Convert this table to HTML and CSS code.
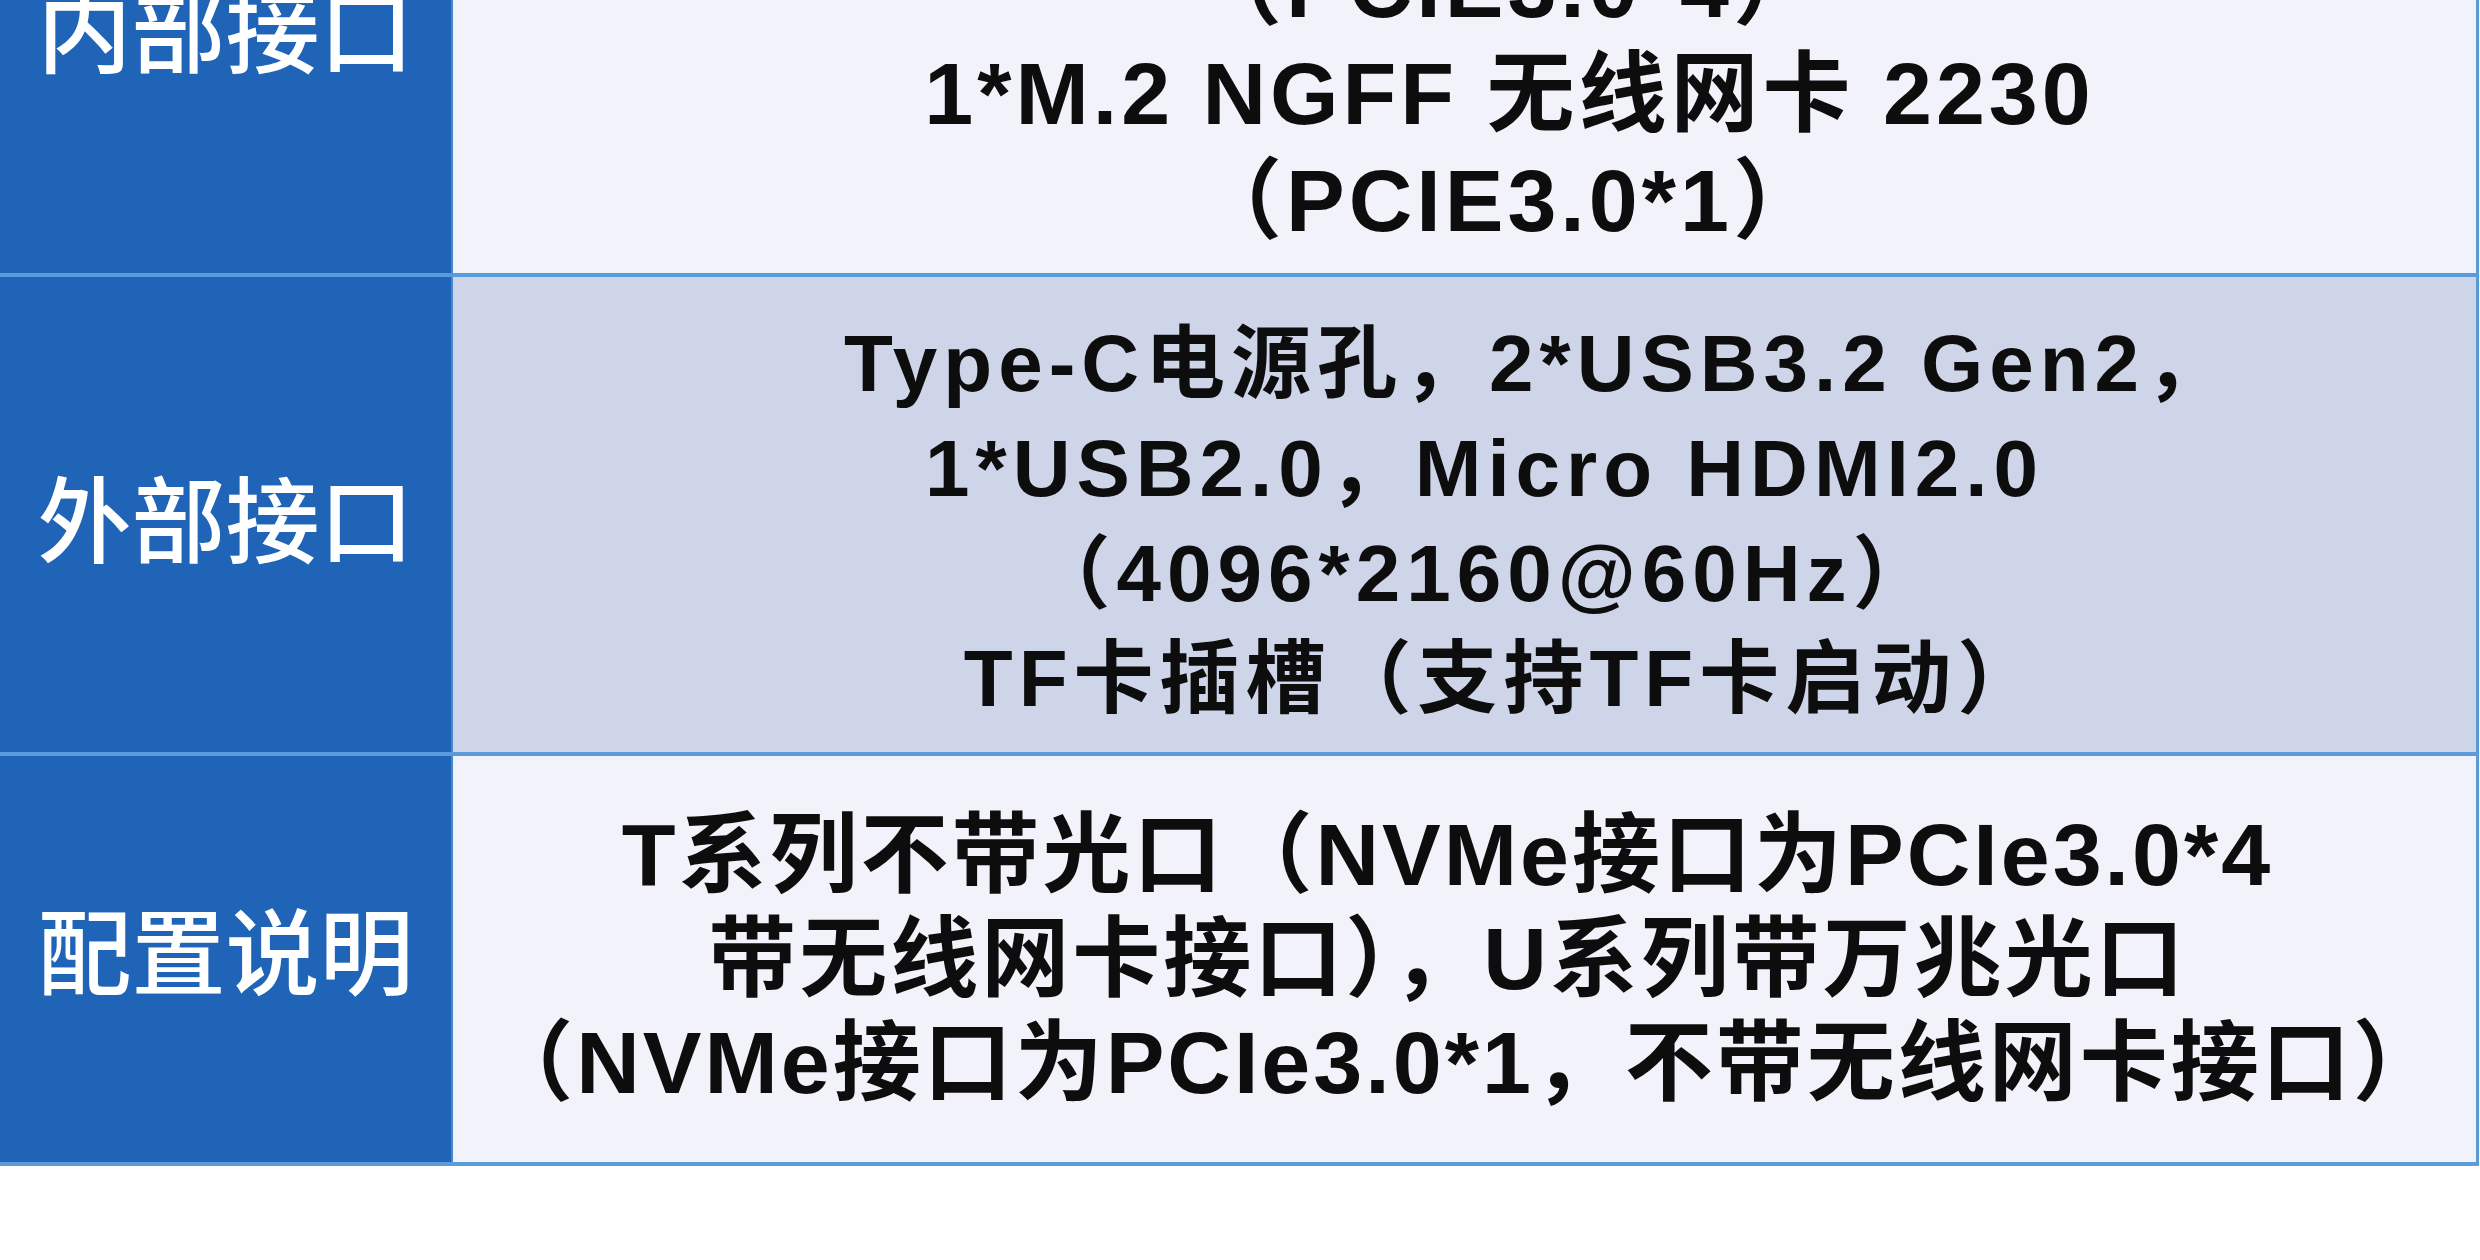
FILE: index.html
```html
<!DOCTYPE html>
<html lang="zh-CN">
<head>
<meta charset="utf-8">
<title>接口规格</title>
<link rel="stylesheet" href="styles.css">
</head>
<body>
<div class="page">
  <div class="spec-table">
    <div class="row row-light row-internal">
      <div class="label label-internal">内部接口</div>
      <div class="value value-narrow value-internal">
        <div class="line">1*M.2 NVMe 固态硬盘 2280</div>
        <div class="line">（PCIE3.0*4）</div>
        <div class="line">1*M.2 NGFF 无线网卡 2230</div>
        <div class="line">（PCIE3.0*1）</div>
      </div>
    </div>
    <div class="row row-dark row-external">
      <div class="label">外部接口</div>
      <div class="value value-wide">
        <div class="line line-first">Type-C电源孔，2*USB3.2 Gen2，</div>
        <div class="line">1*USB2.0，Micro HDMI2.0</div>
        <div class="line">（4096*2160@60Hz）</div>
        <div class="line line-last">TF卡插槽（支持TF卡启动）</div>
      </div>
    </div>
    <div class="row row-light row-config">
      <div class="label label-config">配置说明</div>
      <div class="value value-narrow value-config">
        <div class="line line-left">T系列不带光口（NVMe接口为PCIe3.0*4</div>
        <div class="line line-left">带无线网卡接口），U系列带万兆光口</div>
        <div class="line">（NVMe接口为PCIe3.0*1，不带无线网卡接口）</div>
      </div>
    </div>
  </div>
</div>
</body>
</html>
```
FILE: styles.css
```css
html, body {
  margin: 0;
  padding: 0;
  background: #ffffff;
}

.page {
  width: 2480px;
  height: 1260px;
  overflow: hidden;
}

.spec-table {
  margin-top: -207px;
  width: 2479px;
  border-right: 3px solid #5b9bd5;
  box-sizing: border-box;
  display: flex;
  flex-direction: column;
}

.row {
  display: grid;
  grid-template-columns: 453px 1fr;
  border-bottom: 4px solid #5a9bdc;
  box-sizing: border-box;
}

.row-internal { height: 484px; }
.row-external { height: 479px; }
.row-config { height: 410px; }

.label {
  background: #1f64b7;
  color: #ffffff;
  font-family: "Noto Sans CJK SC", sans-serif;
  font-weight: 500;
  font-size: 94px;
  display: flex;
  align-items: center;
  justify-content: center;
  border-right: 2px solid #4a86cf;
}

.label-internal { padding-bottom: 16px; }
.label-config { padding-bottom: 24px; }

.row-light .value { background: #f2f2fa; }
.row-dark .value { background: #cfd5e9; }

.value {
  display: flex;
  flex-direction: column;
  align-items: center;
  justify-content: center;
  color: #0d0d0d;
  font-weight: 700;
  white-space: nowrap;
}

.value-narrow {
  font-family: "Liberation Sans", "Noto Sans CJK SC", sans-serif;
  font-size: 88px;
  line-height: 104px;
  letter-spacing: 4px;
}

.value-internal {
  padding-left: 90px;
  padding-top: 14px;
  line-height: 107px;
}

.value-config {
  letter-spacing: 3px;
}

.line-left {
  padding-right: 34px;
}

.value-wide {
  font-family: "Liberation Sans", "Noto Sans CJK SC", sans-serif;
  font-size: 80px;
  line-height: 105px;
  letter-spacing: 6px;
  padding-top: 12px;
  padding-left: 40px;
}

.line-first {
  padding-left: 106px;
}

.line-last {
  padding-left: 38px;
}
```
